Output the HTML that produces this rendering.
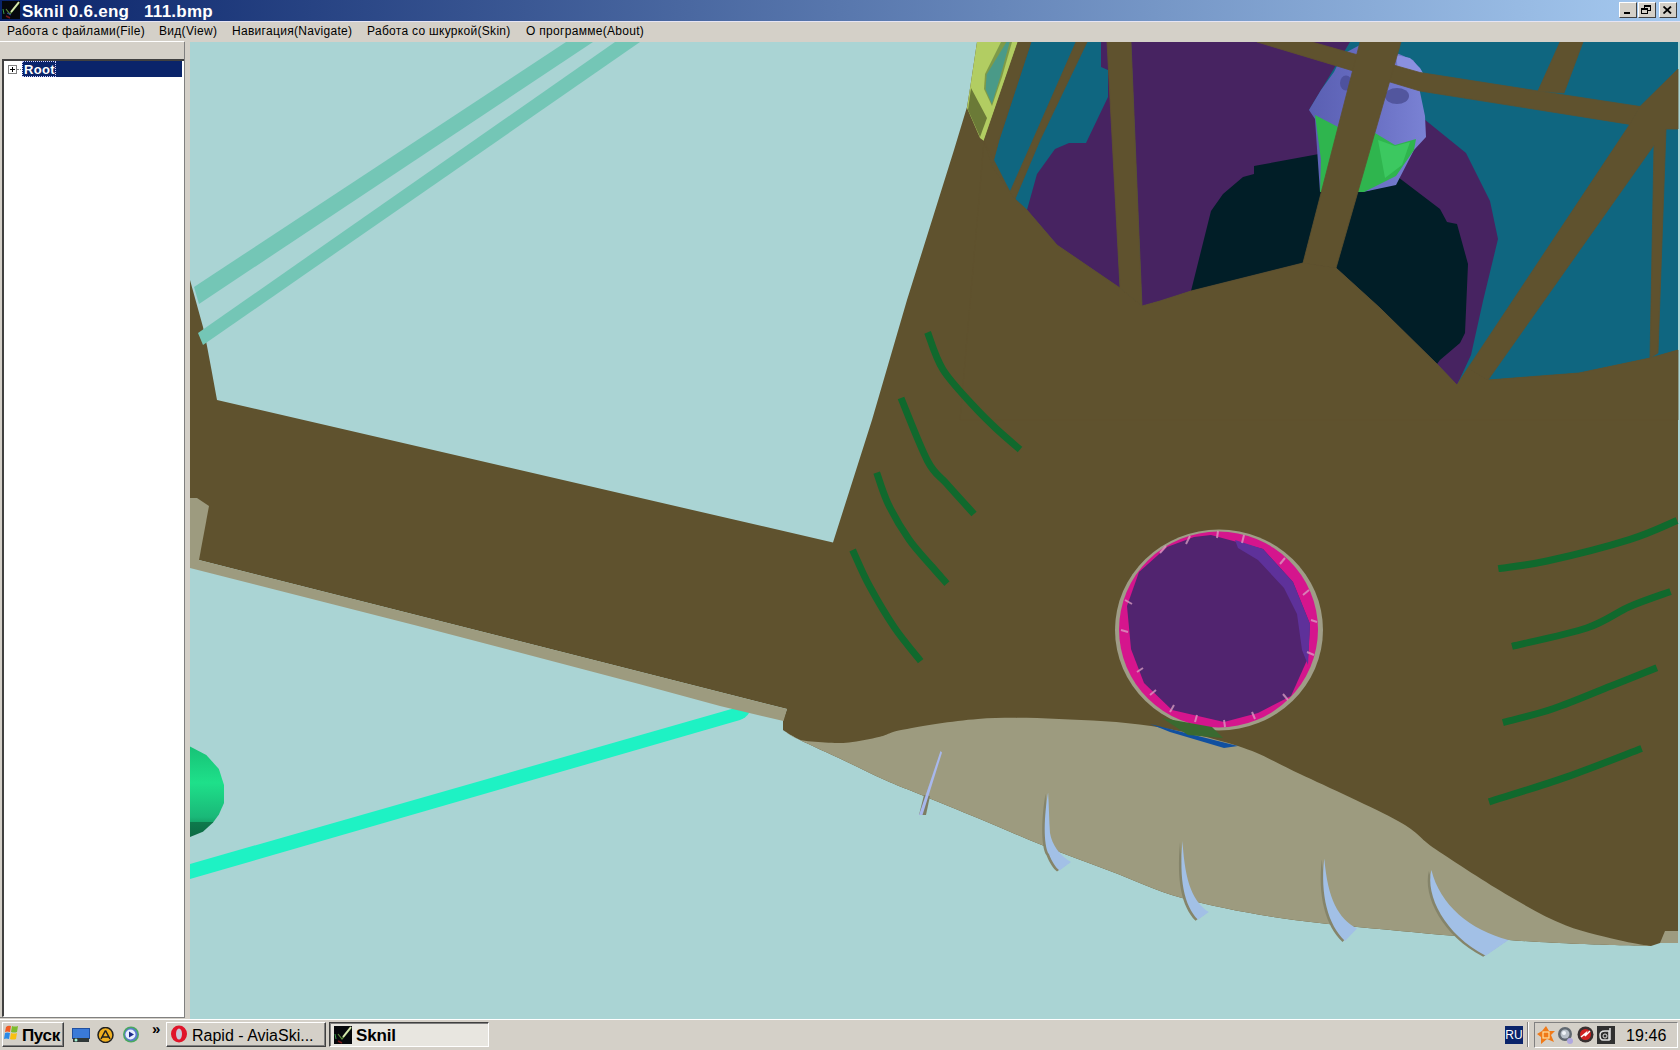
<!DOCTYPE html>
<html><head><meta charset="utf-8">
<style>
*{margin:0;padding:0;box-sizing:border-box}
html,body{width:1680px;height:1050px;overflow:hidden;background:#d4d0c8;font-family:"Liberation Sans",sans-serif}
.abs{position:absolute}
#title{left:0;top:0;width:1680px;height:21px;background:linear-gradient(to right,#0a246a 0%,#a6caf0 100%)}
#ttext{left:22px;top:1.5px;color:#fff;font-weight:bold;font-size:17px;letter-spacing:0.25px;white-space:pre;line-height:20px}
.tbtn{top:2px;width:18px;height:16px;background:#d4d0c8;border-top:1px solid #fff;border-left:1px solid #fff;border-right:1px solid #404040;border-bottom:1px solid #404040}
#menu{left:0;top:21px;width:1680px;height:19px;background:#d4d0c8;border-top:1px solid #e6e4f4}
.mi{top:23.8px;font-size:12px;letter-spacing:0.3px;color:#000;white-space:pre;line-height:14px}
#left{left:0;top:40px;width:190px;height:978px;background:#d4d0c8}
#tree{left:2px;top:59px;width:183px;height:958px;background:#fff;border-top:2px solid #404040;border-left:2px solid #404040;border-right:1px solid #fff;border-bottom:1px solid #fff}
#vp{left:190px;top:42px;width:1490px;height:977px;overflow:hidden;background:#aad4d4}
#task{left:0;top:1019px;width:1680px;height:31px;background:#d4d0c8;border-top:1px solid #fff}
.raised{border-top:1px solid #fff;border-left:1px solid #fff;border-right:1px solid #404040;border-bottom:1px solid #404040;background:#d4d0c8}
.sunk{border-top:1px solid #808080;border-left:1px solid #808080;border-right:1px solid #fff;border-bottom:1px solid #fff}
</style></head><body>
<div id="title" class="abs"></div>
<svg class="abs" style="left:2px;top:1px" width="18" height="18" viewBox="0 0 18 18">
<rect width="18" height="18" fill="#06080c"/>
<path d="M1,8 L2,13" stroke="#3a9a4a" stroke-width="1"/>
<path d="M4,8 L8,13 L17,2" stroke="#5a8a3a" stroke-width="1.2" fill="none"/>
<path d="M9,11 L17,1" stroke="#d8e8b0" stroke-width="2"/>
<path d="M4,15 L8,17" stroke="#7a1a1a" stroke-width="1.5"/>
<path d="M5,12 L9,14" stroke="#3a4aa0" stroke-width="1"/>
</svg>
<div id="ttext" class="abs">Sknil 0.6.eng   111.bmp</div>
<div class="abs tbtn" style="left:1619px"><div class="abs" style="left:4px;top:9px;width:6px;height:2px;background:#000"></div></div>
<div class="abs tbtn" style="left:1638px"><div class="abs" style="left:5px;top:2px;width:7px;height:6px;border:1px solid #000;border-top-width:2px"></div><div class="abs" style="left:2px;top:5px;width:7px;height:6px;border:1px solid #000;border-top-width:2px;background:#d4d0c8"></div></div>
<div class="abs tbtn" style="left:1659px"><svg class="abs" style="left:3px;top:3px" width="9" height="8" viewBox="0 0 9 8"><path d="M0.5,0.5 L8,7.5 M8,0.5 L0.5,7.5" stroke="#000" stroke-width="1.8"/></svg></div>
<div id="menu" class="abs"></div>
<div class="abs mi" style="left:7px">Работа с файлами(File)</div>
<div class="abs mi" style="left:159px">Вид(View)</div>
<div class="abs mi" style="left:232px">Навигация(Navigate)</div>
<div class="abs mi" style="left:367px">Работа со шкуркой(Skin)</div>
<div class="abs mi" style="left:526px">О программе(About)</div>
<div id="left" class="abs"></div>
<div class="abs" style="left:0;top:41px;width:184px;height:1px;background:#fff"></div>
<div id="tree" class="abs"></div>
<div class="abs" style="left:22px;top:61px;width:160px;height:16px;background:#0a246a"></div>
<div class="abs" style="left:22px;top:61px;width:34px;height:16px;border:1px dotted #d0d0ff"></div>
<div class="abs" style="left:8px;top:65px;width:9px;height:9px;border:1px solid #808080;background:#fff"></div>
<div class="abs" style="left:10px;top:69px;width:5px;height:1px;background:#000"></div>
<div class="abs" style="left:12px;top:67px;width:1px;height:5px;background:#000"></div>
<div class="abs" style="left:17px;top:69px;width:4px;height:1px;border-top:1px dotted #808080"></div>
<div class="abs" style="left:24px;top:62px;color:#fff;font-size:13px;letter-spacing:0.3px;font-weight:bold;line-height:15px">Root</div>
<div class="abs" style="left:184px;top:42px;width:1px;height:975px;background:#808080"></div>
<div id="vp" class="abs">
<svg width="1490" height="977" viewBox="190 42 1490 977">
<rect x="190" y="42" width="1490" height="977" fill="#aad4d4"/>
<path fill="#1ef2c4" d="M190,864 L742,706 Q752,706 749,713 Q746,718 740,720 L190,879 Z"/>
<defs><linearGradient id="sph" x1="0" y1="0" x2="0" y2="1"><stop offset="0" stop-color="#17c276"/><stop offset="0.4" stop-color="#1ee08a"/><stop offset="0.78" stop-color="#1ab878"/><stop offset="0.83" stop-color="#16a86c"/><stop offset="0.83" stop-color="#0e7a4c"/><stop offset="1" stop-color="#0c6a44"/></linearGradient></defs>
<polygon fill="url(#sph)" points="190,746.6 206.3,755.1 218.9,768.9 224,784.9 224,803.1 218.9,814.6 213.1,822.6 202.9,831.7 190,836.9"/>
<path fill="#5f522e" d="M977,42 L1678,42 L1678,943 L1660,943 L1651,946 C1639.2,945.7 1603.7,945.0 1580.0,944.0 C1556.3,943.0 1539.0,942.2 1509.0,940.0 C1479.0,937.8 1438.2,934.7 1400.0,931.0 C1361.8,927.3 1316.3,923.5 1280.0,918.0 C1243.7,912.5 1210.3,905.8 1182.0,898.0 C1153.7,890.2 1133.2,879.8 1110.0,871.0 C1086.8,862.2 1064.7,854.2 1043.0,845.5 C1021.3,836.8 1000.7,827.6 980.0,819.0 C959.3,810.4 934.8,800.5 919.0,794.0 C903.2,787.5 897.3,785.5 885.0,780.0 C872.7,774.5 859.3,767.8 845.0,761.0 C830.7,754.2 809.3,744.7 799.0,739.5 C788.7,734.3 785.7,731.6 783.0,730.0 L783,720 L787,709 L195,559 L190,568 L190,280 L203,327 L207,346 L211.5,370 L217,400 L833,542.5 L872,420 L907,300 L954,150 L967,107 L971,82 L977,42 Z"/>
<path fill="#9d9b7f" d="M783,730 C785.7,731.6 792.0,737.4 799.0,739.5 C806.0,741.6 816.7,741.9 825.0,742.4 C833.3,742.9 839.8,743.3 849.0,742.4 C858.2,741.5 870.8,738.9 880.0,736.7 C889.2,734.6 887.7,732.5 904.0,729.5 C920.3,726.5 952.2,720.8 978.0,719.0 C1003.8,717.2 1030.2,717.8 1059.0,719.0 C1087.8,720.2 1121.2,721.5 1151.0,726.0 C1180.8,730.5 1213.2,738.0 1238.0,746.0 C1262.8,754.0 1273.3,761.5 1300.0,774.0 C1326.7,786.5 1375.3,808.4 1398.0,821.0 C1420.7,833.6 1417.5,837.0 1436.0,849.5 C1454.5,862.0 1487.3,883.3 1509.0,896.0 C1530.7,908.7 1547.0,918.0 1566.0,925.5 C1585.0,933.0 1608.8,937.6 1623.0,941.0 C1637.2,944.4 1646.3,945.2 1651.0,946.0 C1639.2,945.7 1603.7,945.0 1580.0,944.0 C1556.3,943.0 1539.0,942.2 1509.0,940.0 C1479.0,937.8 1438.2,934.7 1400.0,931.0 C1361.8,927.3 1316.3,923.5 1280.0,918.0 C1243.7,912.5 1210.3,905.8 1182.0,898.0 C1153.7,890.2 1133.2,879.8 1110.0,871.0 C1086.8,862.2 1064.7,854.2 1043.0,845.5 C1021.3,836.8 1000.7,827.6 980.0,819.0 C959.3,810.4 934.8,800.5 919.0,794.0 C903.2,787.5 897.3,785.5 885.0,780.0 C872.7,774.5 859.3,767.8 845.0,761.0 C830.7,754.2 809.3,744.7 799.0,739.5 C788.7,734.3 785.7,731.6 783.0,730.0 Z"/>
<polygon fill="#9d9b7f" points="1660,943 1665,931 1678,931 1678,943"/>
<polygon fill="#9d9b7f" points="195,559 787,709 783.5,721 720,706 640,684.3 420,626.4 190,568"/>
<polygon fill="#9d9b7f" points="190,498 197,498 209,506 199,560 194,568 190,568"/>
<polygon fill="#74c6b6" points="566,42 593,42 199,304 194,287"/>
<polygon fill="#74c6b6" points="615,42 640,42 203,345 198,333"/>
<!-- ===== cockpit ===== -->
<polygon fill="#0f6680" points="1031,42 1678,42 1678,350 1650,358 1579,373 1488,380 1468,368 1457,385 1437,364 1380,308 1336,268 1303,263 1191,291 1160,301 1142,306 1120,288 1057,245 1027,210 1015,199 1010,192 992,166 999,140"/>
<!-- purple left -->
<polygon fill="#472361" points="1101,42 1108,42 1120,288 1057,245 1027,210 1037,174 1055,149 1069,143 1086,143 1108,97 1108,70 1101,67"/>
<!-- purple right -->
<polygon fill="#472361" points="1131,42 1350,42 1309,110 1424,119 1466,153 1490,201 1498,239 1483,301 1471,355 1457,385 1437,364 1380,308 1336,268 1303,263 1191,291 1160,301 1142,306"/>
<!-- dark -->
<polygon fill="#011e27" points="1191,291 1211,211 1223,194 1243,177 1254,174 1254,166 1319,154 1357,191 1369,191 1394,174 1440,209 1447,222 1457,224 1468,264 1465,333 1460,343 1440,360 1437,364 1380,308 1336,268 1303,263"/>
<!-- head -->
<defs><linearGradient id="hd" x1="0" y1="0" x2="1" y2="0"><stop offset="0" stop-color="#5a5fb2"/><stop offset="0.45" stop-color="#666cc0"/><stop offset="1" stop-color="#7a82d4"/></linearGradient></defs>
<polygon fill="url(#hd)" points="1309,110 1321,90 1334,72 1343,54 1360,45 1399,54 1413,60 1422,72 1420,92 1425,116 1426,137 1414,150 1396,185 1363,192 1320,192 1315,119"/>
<polygon fill="#8a90e0" points="1396,55 1410,58 1420,68 1423,73 1398,70"/>
<ellipse cx="1346" cy="83" rx="6" ry="7.5" fill="#4e529e"/>
<ellipse cx="1397" cy="96" rx="12" ry="8" fill="#52569e"/>
<!-- green -->
<polygon fill="#2fb54e" points="1315,115 1340,128 1375,133 1395,145 1416,139 1414,150 1396,176 1364,192 1320,192 1321,160"/>
<polygon fill="#3cc860" points="1378,140 1395,146 1410,142 1402,165 1385,178"/>
<!-- lime object -->
<polygon fill="#b2cd62" points="977,42 1018,42 984,141 980,138 967,108 971,82"/>
<polygon fill="#6b7a37" points="971,88 987,118 980,137 968,110"/>
<polygon fill="#7e9a48" points="1001,42 1012,42 1002,77 992,106 984,89 985,74"/>
<polygon fill="#4a9a88" points="1006.5,42 1009.7,42 1000.3,76.6 991.9,103.9 985.6,89.2 986.6,74.6"/>
<!-- lower frame -->
<polygon fill="#5f522e" stroke="#5f522e" stroke-width="0.8" points="984,141 992,166 1010,192 1015,199 1027,210 1057,245 1120,288 1142,306 1160,301 1191,291 1303,263 1336,268 1380,308 1437,364 1457,385 1468,368 1488,380 1579,373 1650,358 1678,350 1678,420 960,420"/>
<!-- struts -->
<polygon fill="#5f522e" stroke="#5f522e" stroke-width="0.8" points="1018,42 1031,42 999,140 992,166 1010,192 984,141"/>
<polygon fill="#5f522e" stroke="#5f522e" stroke-width="0.8" points="1076,42 1087,42 1040,140 1015,199 1010,192 1033,140"/>
<polygon fill="#5f522e" stroke="#5f522e" stroke-width="0.8" points="1107,42 1131,42 1142,306 1120,288"/>
<polygon fill="#5f522e" stroke="#5f522e" stroke-width="0.8" points="1257,42 1312,42 1420,72.5 1538,91 1640,106.5 1630,124.4 1420,91"/>
<polygon fill="#5f522e" stroke="#5f522e" stroke-width="0.8" points="1360,42 1401,42 1336,268 1303,263"/>
<polygon fill="#5f522e" stroke="#5f522e" stroke-width="0.8" points="1560,42 1583,42 1564,93 1538,91"/>
<polygon fill="#5f522e" stroke="#5f522e" stroke-width="0.8" points="1630,124 1640,106.5 1678,69 1678,129 1666,129 1658,353 1650,358 1654,145 1488,380 1468,368"/>
<!-- ===== roundel ===== -->
<ellipse cx="1219" cy="630" rx="104" ry="100.5" fill="#9f9d87"/>
<ellipse cx="1218.5" cy="629.5" rx="99.5" ry="98" fill="#d5158d"/>
<polygon fill="#51246f" points="1211,535 1263,549 1293,582 1310,624 1308,658 1291,696 1258,713 1224,722 1172,710 1144,683 1131,649 1127,606 1139,572 1167,547 1194,537"/>
<polygon fill="#5e319a" points="1235,540 1263,549 1293,582 1310,624 1308,665 1302,650 1297,614 1284,588 1258,560 1238,548"/>
<g stroke="#dba2c4" stroke-width="2" opacity="0.75">
<line x1="1190" y1="536" x2="1186" y2="544"/><line x1="1218" y1="531" x2="1217" y2="538"/><line x1="1244" y1="535" x2="1242" y2="543"/>
<line x1="1166" y1="546" x2="1160" y2="553"/><line x1="1285" y1="558" x2="1280" y2="564"/><line x1="1309" y1="590" x2="1303" y2="595"/>
<line x1="1121" y1="630" x2="1128" y2="632"/><line x1="1125" y1="600" x2="1132" y2="604"/><line x1="1137" y1="672" x2="1143" y2="668"/>
<line x1="1170" y1="712" x2="1174" y2="705"/><line x1="1195" y1="722" x2="1197" y2="715"/><line x1="1225" y1="727" x2="1224" y2="720"/>
<line x1="1255" y1="719" x2="1252" y2="712"/><line x1="1288" y1="700" x2="1283" y2="694"/><line x1="1314" y1="655" x2="1307" y2="652"/>
<line x1="1150" y1="695" x2="1156" y2="690"/><line x1="1311" y1="620" x2="1317" y2="622"/>
</g>
<polygon fill="#1050a0" points="1150,724 1238,746 1224,748 1170,732"/>
<polygon fill="#3a6a30" points="1162,718 1212,727 1223,738 1188,735"/>
<g fill="none" stroke="#10692d" stroke-width="7">
<path d="M927.6,332.4 C930.1,338.6 935.3,357.3 942.9,369.5 C950.5,381.7 964.4,395.8 973.3,405.7 C982.2,415.6 988.4,421.3 996.2,428.6 C1004.0,435.9 1016.0,446.0 1020.0,449.5"/>
<path d="M901,398 C905.4,408.5 920.0,446.7 927.6,461.0 C935.2,475.3 939.0,475.0 946.7,483.8 C954.4,492.6 969.5,509.0 974.0,514.0"/>
<path d="M876.7,472.6 C878.6,477.8 882.8,492.8 888.2,504.0 C893.6,515.2 901.8,529.1 909.1,539.6 C916.4,550.1 925.9,559.6 932.2,566.9 C938.5,574.2 944.5,580.8 946.9,583.6"/>
<path d="M852.6,550 C855.4,556.0 862.3,572.8 869.3,585.7 C876.3,598.6 885.9,615.0 894.5,627.6 C903.1,640.2 916.3,655.5 920.7,661.1"/>
<path d="M1498.3,568.6 C1506.4,567.3 1525.2,565.8 1547.0,561.0 C1568.8,556.2 1607.7,546.4 1629.4,539.6 C1651.1,532.9 1669.1,523.7 1677.0,520.5"/>
<path d="M1512,646.3 C1524.5,643.2 1567.1,634.6 1586.7,628.0 C1606.3,621.4 1615.4,612.8 1629.4,606.7 C1643.4,600.6 1663.7,594.0 1670.5,591.5"/>
<path d="M1502.9,722.6 C1511.2,720.3 1535.0,714.9 1553.0,708.8 C1571.0,702.7 1593.7,692.9 1611.0,686.0 C1628.3,679.1 1649.2,670.8 1656.8,667.7"/>
<path d="M1489,801.8 C1501.7,797.7 1540.0,786.3 1565.4,777.4 C1590.8,768.5 1628.9,753.3 1641.6,748.5"/>
</g>
<!-- ===== teeth ===== -->
<g fill="#85846a" transform="translate(-2.5,1)">
<path d="M1048.1,792.4 C1044,815 1043,845 1049,854.3 C1052,862 1056,868 1059.5,870.5 L1071,861.9 C1060,856 1052,845 1050,833 C1049,820 1049,805 1048.1,792.4 Z"/>
<path d="M1182.5,840.9 C1179,880 1184,905 1198,919.8 L1208.8,912 C1194,902 1185,885 1182.5,840.9 Z"/>
<path d="M1324.3,858.6 C1320,895 1328,925 1345,941 L1357,928.6 C1338,918 1328,900 1324.3,858.6 Z"/>
<path d="M1431.4,870 C1425,895 1445,935 1485.7,955.7 L1508.6,940 C1470,930 1440,905 1431.4,870 Z"/>
</g>
<g fill="#a2c0e6">
<polygon fill="#7d7c62" points="924,795 930,796 926,815 919,815"/><path d="M940.5,751 L942,752.5 L922.5,815 L919,815 Z" fill="#a8b8ec"/>
<path d="M1048.1,792.4 C1044,815 1043,845 1049,854.3 C1052,862 1056,868 1059.5,870.5 L1071,861.9 C1060,856 1052,845 1050,833 C1049,820 1049,805 1048.1,792.4 Z"/>
<path d="M1182.5,840.9 C1179,880 1184,905 1198,919.8 L1208.8,912 C1194,902 1185,885 1182.5,840.9 Z"/>
<path d="M1324.3,858.6 C1320,895 1328,925 1345,941 L1357,928.6 C1338,918 1328,900 1324.3,858.6 Z"/>
<path d="M1431.4,870 C1425,895 1445,935 1485.7,955.7 L1508.6,940 C1470,930 1440,905 1431.4,870 Z"/>
</g>
</svg>
</div>
<div id="task" class="abs"></div>
<div class="abs" style="left:0;top:1017px;width:185px;height:1px;background:#808080"></div>
<!-- start button -->
<div class="abs" style="left:2px;top:1022px;width:62px;height:25px;border-top:1px solid #fff;border-left:1px solid #fff;border-right:1px solid #404040;border-bottom:1px solid #404040;background:#d4d0c8"></div>
<div class="abs" style="left:62px;top:1023px;width:1px;height:23px;background:#808080"></div>
<div class="abs" style="left:3px;top:1045px;width:60px;height:1px;background:#808080"></div>
<svg class="abs" style="left:4px;top:1025px" width="16" height="15" viewBox="0 0 16 15">
<path d="M2,2 Q4,0 7,1 L6,7 Q3,6 1,7 Z" fill="#f05a22"/>
<path d="M8,1 Q11,2 14,1 L13,7 Q10,8 7,7 Z" fill="#7cbb2a"/>
<path d="M1,8 Q3,7 6,8 L5,14 Q2,13 0,14 Z" fill="#2a8ae8"/>
<path d="M7,8 Q10,9 13,8 L12,14 Q9,15 6,14 Z" fill="#f8c010"/>
</svg>
<div class="abs tt" style="left:22px;top:1026.5px;font-size:17px;font-weight:bold;color:#000;line-height:18px;letter-spacing:-0.35px">Пуск</div>
<!-- quick launch -->
<svg class="abs" style="left:72px;top:1028px" width="18" height="15" viewBox="0 0 18 15">
<rect x="0.5" y="0.5" width="17" height="10" fill="#3a7ad8" stroke="#2050a0"/>
<rect x="1" y="10" width="16" height="4" fill="#303838"/>
<circle cx="4" cy="12" r="1.5" fill="#a0f0d0"/>
</svg>
<svg class="abs" style="left:97px;top:1027px" width="17" height="16" viewBox="0 0 17 16">
<circle cx="8.5" cy="8" r="7.5" fill="#f0b020" stroke="#202020" stroke-width="1.5"/>
<path d="M8.5,3.5 L4,12 M8.5,3.5 L13,12 M5.5,10 L11.5,10" stroke="#202020" stroke-width="1.6" fill="none"/>
</svg>
<svg class="abs" style="left:122px;top:1026px" width="18" height="17" viewBox="0 0 18 17">
<circle cx="9" cy="8.5" r="8" fill="#4aa860"/>
<circle cx="9" cy="8.5" r="6.5" fill="#5a7ad0"/>
<circle cx="8.5" cy="8.5" r="5" fill="#e8f0ff"/>
<path d="M7,5.5 L12,8.5 L7,11.5 Z" fill="#1a2a8a"/>
</svg>
<div class="abs" style="left:152px;top:1021px;font-size:15px;font-weight:bold;line-height:15px;color:#000">»</div>
<!-- Rapid button -->
<div class="abs" style="left:166px;top:1022px;width:160px;height:25px;border-top:1px solid #fff;border-left:1px solid #fff;border-right:1px solid #404040;border-bottom:1px solid #404040;background:#d4d0c8"></div>
<div class="abs" style="left:324px;top:1023px;width:1px;height:23px;background:#808080"></div>
<div class="abs" style="left:167px;top:1045px;width:157px;height:1px;background:#808080"></div>
<svg class="abs" style="left:170px;top:1025px" width="18" height="18" viewBox="0 0 18 18">
<ellipse cx="9" cy="9" rx="8" ry="8.5" fill="#e0142a"/>
<ellipse cx="9" cy="9" rx="3" ry="5.5" fill="#c8c8d8"/>
</svg>
<div class="abs tt" style="left:192px;top:1027px;font-size:16px;color:#000;line-height:18px;white-space:pre">Rapid - AviaSki...</div>
<!-- Sknil button pressed -->
<div class="abs" style="left:329px;top:1022px;width:160px;height:25px;border-top:1px solid #404040;border-left:1px solid #404040;border-right:1px solid #fff;border-bottom:1px solid #fff;background:#e8e6e0"></div>
<div class="abs" style="left:330px;top:1023px;width:158px;height:1px;background:#808080"></div>
<div class="abs" style="left:330px;top:1023px;width:1px;height:23px;background:#808080"></div>
<svg class="abs" style="left:334px;top:1026px" width="18" height="18" viewBox="0 0 18 18">
<rect width="18" height="18" fill="#06080c"/>
<path d="M1,8 L2,13" stroke="#3a9a4a" stroke-width="1"/>
<path d="M4,8 L8,13 L17,2" stroke="#5a8a3a" stroke-width="1.2" fill="none"/>
<path d="M9,11 L17,1" stroke="#d8e8b0" stroke-width="2"/>
<path d="M4,15 L8,17" stroke="#7a1a1a" stroke-width="1.5"/>
</svg>
<div class="abs tt" style="left:356px;top:1027px;font-size:17px;font-weight:bold;color:#000;line-height:18px;letter-spacing:-0.15px">Sknil</div>
<!-- tray -->
<div class="abs" style="left:1505px;top:1026px;width:18px;height:18px;background:#0a246a;color:#fff;font-size:12px;line-height:18px;text-align:center">RU</div>
<div class="abs" style="left:1527px;top:1022px;width:1px;height:25px;background:#808080"></div>
<div class="abs" style="left:1528px;top:1022px;width:1px;height:25px;background:#fff"></div>
<div class="abs" style="left:1534px;top:1022px;width:144px;height:26px;border-top:1px solid #808080;border-left:1px solid #808080;border-right:1px solid #fff;border-bottom:1px solid #fff"></div>
<svg class="abs" style="left:1536px;top:1025px" width="20" height="20" viewBox="0 0 20 20">
<path d="M10,1 L13,6 L19,6 L15,10 L18,17 L11,14 L5,19 L5,12 L1,9 L6,6 Z" fill="#f07a18"/>
<rect x="7" y="7" width="6" height="6" fill="none" stroke="#ffe0a0" stroke-width="1.2"/>
</svg>
<svg class="abs" style="left:1557px;top:1026px" width="18" height="19" viewBox="0 0 18 19">
<circle cx="8" cy="8" r="7" fill="#606870"/>
<circle cx="8" cy="8" r="4.5" fill="#b8c0c8"/>
<circle cx="7" cy="7" r="2" fill="#f0f4f8"/>
<circle cx="13" cy="15" r="3" fill="#b0a8e0"/>
</svg>
<svg class="abs" style="left:1577px;top:1026px" width="17" height="17" viewBox="0 0 17 17">
<circle cx="8.5" cy="8.5" r="8" fill="#383030"/>
<circle cx="8.5" cy="8.5" r="5.5" fill="#d02020"/>
<path d="M4,11 L9,7 L8,10 L13,5" stroke="#fff" stroke-width="1.5" fill="none"/>
</svg>
<svg class="abs" style="left:1597px;top:1026px" width="18" height="18" viewBox="0 0 18 18">
<rect width="18" height="18" fill="#303030"/>
<path d="M3,9 Q3,5 8,5 L12,5 L12,14 L6,14 Q3,14 3,9 Z" fill="none" stroke="#e0e0e0" stroke-width="1.5"/>
<path d="M13,2 L13,14" stroke="#e0e0e0" stroke-width="1.5"/>
<circle cx="8" cy="10" r="2" fill="none" stroke="#e0e0e0" stroke-width="1"/>
</svg>
<div class="abs tt" style="left:1626px;top:1027px;font-size:16px;letter-spacing:0.1px;color:#000;line-height:18px">19:46</div>
</body></html>
